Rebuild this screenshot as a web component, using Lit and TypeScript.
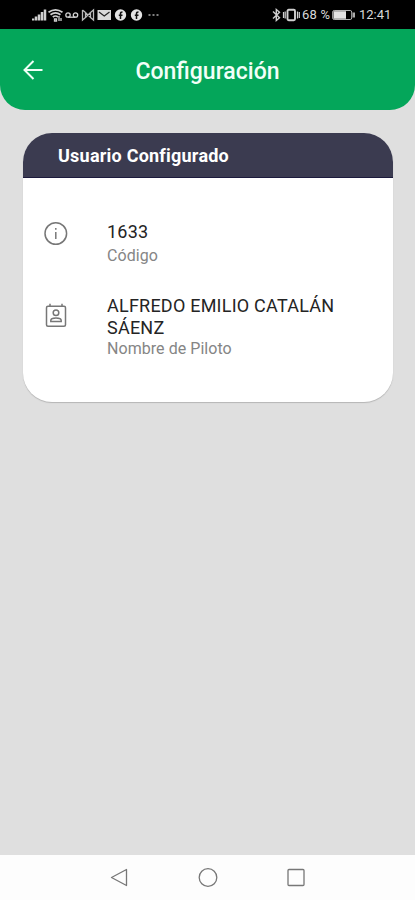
import { LitElement, html, css, svg } from "lit";
import { customElement, property } from "lit/decorators.js";

@customElement("status-bar")
class StatusBar extends LitElement {
  static styles = css`
    :host { display: flex; height: 29px; flex: none; align-items: center; justify-content: space-between;
      background: #000; color: #d8d8d8; padding: 1px 24px 0 32px; box-sizing: border-box;
      font: 400 13px/20px Roboto, sans-serif; }
    .group { display: flex; align-items: center; }
    svg { display: block; flex: none; }
    .battery-text { margin-left: 2px; width: 30px; white-space: nowrap; letter-spacing: .2px; }
    .clock { width: 32px; margin-left: 3px; white-space: nowrap; }
  `;
  render() {
    return html`
      <div class="group">
        <svg width="128" height="14" viewBox="0 0 128 14" fill="none" stroke="#d0d0d0">
          <path d="M1 10.5V12.5M4 8.5V12.5M7 6.500V12.500M10 4V12.500M13 1.500V12.500" stroke-width="2.500" />
          <path d="M16.500 4.300Q23.500-.7 30.500 4.300M18.500 6.700Q23.500 3 28.500 6.700M20.800 9Q23.500 7 26 9" stroke-width="1.700" />
          <path d="M22.500 11h2v2h-2zM27 8v5M29 10v3" stroke-width="1.300" />
          <circle cx="36" cy="7" r="2.200" stroke-width="1.300" /><circle cx="43.500" cy="7" r="2.200" stroke-width="1.300" />
          <path d="M36 9.200H43.500" stroke-width="1.300" />
          <path d="M50.500 2V12L53.500 9.500V4.500L58.500 9.500V4.500L61.500 2V12L58.500 9.500M50.500 2L53.500 4.500M53.500 9.500L58.500 4.500" stroke-width="1.300" stroke="#b9b9b9" />
          <path d="M65.500 2H79V12H65.500Z" fill="#dadada" stroke="none" />
          <path d="M67 4L72.250 8L77.500 4" stroke="#222" stroke-width="1.200" />
          <circle cx="88.500" cy="7" r="5.700" fill="#e4e4e4" stroke="none" />
          <path d="M88.500 11V5.500Q88.500 4 90.500 4M86.800 7.300H90.500" stroke="#111" stroke-width="1.500" />
          <circle cx="104.500" cy="7" r="5.700" fill="#e4e4e4" stroke="none" />
          <path d="M104.500 11V5.500Q104.500 4 106.500 4M102.800 7.300H106.500" stroke="#111" stroke-width="1.500" />
          <path d="M116.500 7H118.500M120.500 7H122.500M124.500 7H126.500" stroke-width="1.600" stroke="#aaa" />
        </svg>
      </div>
      <div class="group">
        <svg width="29" height="14" viewBox="0 0 29 14" fill="none" stroke="#d0d0d0" stroke-width="1.400">
          <path d="M2 3.500L8.500 9.800L5.300 12.500V1.500L8.500 4.200L2 10.500" />
          <rect x="16.500" y="1.800" width="7.500" height="10.500" rx="1.200" stroke-width="1.900" />
          <path d="M14.200 3.500V10.500M26.500 3.500V10.500M12.500 4V10M28.300 4V10" stroke-width="1.200" />
        </svg>
        <span class="battery-text">68 %</span>
        <svg width="24" height="12" viewBox="0 0 24 12">
          <rect x=".7" y="1.500" width="19" height="9" rx="1.500" fill="none" stroke="#b5b5b5" />
          <path d="M1.500 2.200H14V9.800H1.500Z" fill="#e4e4e4" /><path d="M20.500 3.500H23V8.500H20.500Z" fill="#aaa" />
        </svg>
        <span class="clock">12:41</span>
      </div>`;
  }
}

@customElement("info-row")
class InfoRow extends LitElement {
  @property() icon = "info";
  @property() value = "";
  @property() label = "";
  static styles = css`
    :host { display: grid; grid-template-columns: 64px 1fr; align-items: start;
      font-family: Roboto, sans-serif; }
    svg { display: block; }
    .contact-icon { margin-top: 7px; }
    .value { color: #242424; font-size: 18px; line-height: 22px; letter-spacing: .23px; }
    .label { color: #858585; font-size: 16px; line-height: 20px; letter-spacing: .05px; }
    .info .label { margin-top: 3px; }
  `;
  render() {
    const art = this.icon === "info"
      ? svg`<circle cx="12.800" cy="12.500" r="10.800" /><path d="M12.800 11V18M12.800 7V8.800" />`
      : svg`<rect x="3.500" y="4.200" width="19" height="20" rx="1.500" /><path d="M7 1.800V4M19 1.800V4" />
            <circle cx="13" cy="10.700" r="2.800" /><path d="M7.800 19.500V18.500C7.800 15.200 18.200 15.200 18.200 18.500V19.500Z" />`;
    return html`
      <svg class="${this.icon}-icon" width="26" height="26" viewBox="0 0 26 26" fill="none" stroke="#777" stroke-width="1.500">${art}</svg>
      <div class=${this.icon}>
        <div class="value">${this.value}</div>
        <div class="label">${this.label}</div>
      </div>`;
  }
}

@customElement("app-root")
class AppRoot extends LitElement {
  static styles = css`
    :host { display: flex; flex-direction: column; width: 415px; height: 900px; background: #dfdfdf;
      font-family: Roboto, sans-serif; overflow: hidden; }
    .header { display: grid; grid-template-columns: 66px 1fr 66px; align-items: center; height: 81px; flex: none;
      background: #04a65a; border-radius: 0 0 25px 25px; color: #f2fff8; box-sizing: border-box; padding-top: 2px; }
    .back { display: block; margin-left: 22px; }
    .title { margin: 0; padding-top: 2px; text-align: center; font-size: 23px; line-height: 30px; font-weight: 500; }
    .card { flex: none; margin: 23px 22.500px 0 23px; height: 269px; background: #fff; border-radius: 29px;
      overflow: hidden; box-shadow: 0 1px 1px #b5b5b5; }
    .card-title { margin: 0; height: 45px; line-height: 45px; box-sizing: border-box; padding-left: 35px;
      background: #3b3b50; border-bottom: 1px solid #1c1a3d; color: #fff; font-size: 18px; font-weight: 700;
      letter-spacing: .23px; }
    .rows { display: flex; flex-direction: column; gap: 29px; padding: 43px 40px 0 20px; }
    .nav { display: flex; justify-content: center; align-items: center; flex: none; height: 45px; gap: 64px;
      margin-top: auto; background: #fdfdfd; }
    .nav svg { display: block; }
  `;
  render() {
    return html`
      <status-bar></status-bar>
      <header class="header">
        <svg class="back" width="22" height="22" viewBox="0 0 22 22" fill="none" stroke="#effff6" stroke-width="2">
          <path d="M20.500 10H2.500M11.500 1L2.500 10L11.500 19" />
        </svg>
        <h1 class="title">Configuración</h1>
      </header>
      <section class="card">
        <h2 class="card-title">Usuario Configurado</h2>
        <div class="rows">
          <info-row icon="info" value="1633" label="Código"></info-row>
          <info-row icon="contact" value="ALFREDO EMILIO CATALÁN SÁENZ" label="Nombre de Piloto"></info-row>
        </div>
      </section>
      <nav class="nav">
        <svg width="24" height="24" viewBox="0 0 24 24" fill="none" stroke="#777" stroke-width="1.300" stroke-linejoin="round"><path d="M18.500 3.500V19.500L3.500 11.500Z" /></svg>
        <svg width="24" height="24" viewBox="0 0 24 24" fill="none" stroke="#777" stroke-width="1.300"><circle cx="12" cy="11.500" r="8.800" /></svg>
        <svg width="24" height="24" viewBox="0 0 24 24" fill="none" stroke="#777" stroke-width="1.300"><rect x="4" y="3.500" width="16" height="16" rx="1" /></svg>
      </nav>`;
  }
}
